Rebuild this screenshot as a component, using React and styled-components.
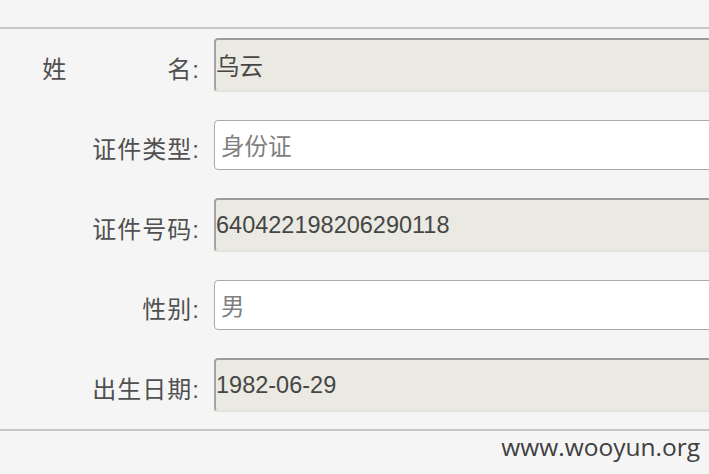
import styled, { createGlobalStyle } from "styled-components";

const GlobalStyle = createGlobalStyle`
  html, body {
    margin: 0;
    padding: 0;
    background: #f5f5f5;
    overflow: hidden;
  }
`;

const rows = [
  { label: "姓\u3000\u3000\u3000\u3000名", value: "乌云", locked: true },
  { label: "证件类型", value: "身份证" },
  { label: "证件号码", value: "640422198206290118", locked: true },
  { label: "性别", value: "男" },
  { label: "出生日期", value: "1982-06-29", locked: true },
];

const App = () => (
  <>
    <GlobalStyle />
    <Page>
      <Form>
        {rows.map((row) => (
          <Row key={row.label}>
            <Label>{row.label}:</Label>
            <Field $locked={row.locked} defaultValue={row.value} readOnly />
          </Row>
        ))}
      </Form>
      <Footer>www.wooyun.org</Footer>
    </Page>
  </>
);

const Page = styled.div`
  width: 709px;
  height: 474px;
  padding-top: 27px;
  box-sizing: border-box;
  overflow: hidden;
  font-family: "Liberation Sans", "Noto Sans CJK SC", sans-serif;
`;

const Form = styled.div`
  display: flex;
  flex-direction: column;
  gap: 28px;
  padding: 9px 0 17px;
  border-top: 2px solid #c6c6c6;
  border-bottom: 2px solid #c6c6c6;
`;

const Row = styled.div`
  display: flex;
  align-items: center;
`;

const Label = styled.label`
  flex: 0 0 200px;
  margin-right: 14px;
  padding-top: 5px;
  text-align: right;
  font-size: 24px;
  letter-spacing: 1px;
  color: #505050;
`;

const Field = styled.input`
  flex: 0 0 520px;
  box-sizing: border-box;
  height: ${(p) => (p.$locked ? "54px" : "50px")};
  padding: ${(p) => (p.$locked ? "0" : "0 0 0 6px")};
  font-family: "Liberation Sans", "Noto Sans CJK SC", sans-serif;
  font-size: 23.5px;
  color: ${(p) => (p.$locked ? "#464646" : "#808080")};
  background: ${(p) => (p.$locked ? "#eae9e2" : "#ffffff")};
  border-radius: 4px;
  outline: none;
  border: ${(p) => (p.$locked ? "2px solid" : "1px solid #aaaaaa")};
  border-color: ${(p) =>
    p.$locked ? "#9c9c9c #e4e3dc #e4e3dc #a4a4a4" : "#aaaaaa"};
`;

const Footer = styled.div`
  padding: 2px 9px 0 0;
  text-align: right;
  font-family: "Open Sans", "Liberation Sans", sans-serif;
  font-size: 24.5px;
  line-height: 28px;
  color: #404040;
`;

export default App;
